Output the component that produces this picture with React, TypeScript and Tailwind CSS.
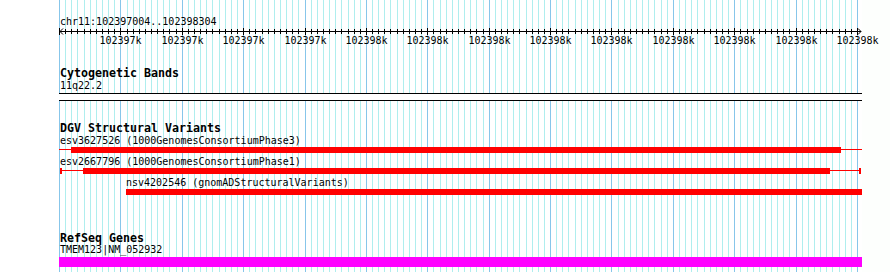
import React from 'react'

const PANEL_W = 803
const MINOR = 798 / 130
const gx = (k: number) => Math.round(k * MINOR) + 0.5

const mono = { fontFamily: '"DejaVu Sans Mono", monospace' }

const Grid = () => (
  <svg className="absolute left-0 top-0" width={PANEL_W} height={272} shapeRendering="crispEdges">
    {Array.from({ length: 131 }, (_, k) => (
      <line
        key={k}
        x1={gx(k)}
        x2={gx(k)}
        y1={0}
        y2={272}
        stroke={k % 10 === 0 ? '#87c6ea' : '#afeeee'}
        strokeWidth={1}
      />
    ))}
  </svg>
)

const Ruler = () => (
  <svg width={PANEL_W} height={20} className="block overflow-visible" style={mono}>
    <line x1={1} x2={802} y1={3.5} y2={3.5} stroke="black" shapeRendering="crispEdges" />
    <polyline points="4,0.5 1,3.5 4,6.5" fill="none" stroke="black" />
    <polyline points="799,0.5 802,3.5 799,6.5" fill="none" stroke="black" />
    {Array.from({ length: 131 }, (_, k) => (
      <line
        key={k}
        x1={gx(k)}
        x2={gx(k)}
        y1={k % 10 === 0 ? 0 : 1}
        y2={k % 10 === 0 ? 7 : 6}
        stroke="black"
        shapeRendering="crispEdges"
      />
    ))}
    {Array.from({ length: 13 }, (_, i) => (
      <text key={i} x={gx((i + 1) * 10)} y={15.5} textAnchor="middle" fontSize={10} fill="black">
        {i < 4 ? '102397k' : '102398k'}
      </text>
    ))}
  </svg>
)

type Variant = {
  label: string
  offset: number
  thick: [number, number]
  thin?: [number, number]
  caps?: boolean
}

const variants: Variant[] = [
  { label: 'esv3627526 (1000GenomesConsortiumPhase3)', offset: 1, thick: [12, 782], thin: [0, 803] },
  { label: 'esv2667796 (1000GenomesConsortiumPhase1)', offset: 1, thick: [24, 771], thin: [1, 802], caps: true },
  { label: 'nsv4202546 (gnomADStructuralVariants)', offset: 67, thick: [67, 803] },
]

const Title = ({ children, className }: { children: React.ReactNode; className: string }) => (
  <div className={`h-[12px] pl-px pt-px text-[11.63px] font-bold leading-[11px] text-black ${className}`}>{children}</div>
)

const Label = ({ children, pad = 'pl-px', className = '' }: { children: React.ReactNode; pad?: string; className?: string }) => (
  <div className={`${pad} h-[12px] whitespace-nowrap text-[10px] leading-[12px] text-black ${className}`}>{children}</div>
)

export default function App() {
  return (
    <div className="flex h-[272px] w-[890px] overflow-hidden bg-white" style={mono}>
      <div className="w-[59px] shrink-0 bg-white" />
      <div className="relative w-[803px] shrink-0 bg-white">
        <Grid />
        <div className="relative">
          <div className="h-[28px] pl-px pt-[16px] text-[10px] leading-[12px] text-black">chr11:102397004..102398304</div>
          <Ruler />

          {/* Cytogenetic Bands */}
          <Title className="mt-[19px]">Cytogenetic Bands</Title>
          <Label className="mt-px">11q22.2</Label>
          <svg width={PANEL_W} height={10} className="block" shapeRendering="crispEdges">
            <rect x={-2} y={1.5} width={PANEL_W + 4} height={7} fill="white" stroke="black" />
          </svg>

          {/* DGV Structural Variants */}
          <Title className="mt-[20px]">DGV Structural Variants</Title>
          <div className="mt-px flex flex-col gap-[3px]">
            {variants.map((v) => (
              <div key={v.label}>
                <Label pad={v.offset === 1 ? 'pl-px' : 'pl-[67px]'}>{v.label}</Label>
                <svg width={PANEL_W} height={6} className="block" shapeRendering="crispEdges">
                  {v.thin && <rect x={v.thin[0]} y={2} width={v.thin[1] - v.thin[0]} height={1} fill="#ff0000" />}
                  {v.caps && (
                    <>
                      <rect x={1} y={0} width={2} height={6} fill="#ff0000" />
                      <rect x={800} y={0} width={2} height={6} fill="#ff0000" />
                    </>
                  )}
                  <rect x={v.thick[0]} y={0} width={v.thick[1] - v.thick[0]} height={6} fill="#ff0000" />
                </svg>
              </div>
            ))}
          </div>

          {/* RefSeq Genes */}
          <Title className="mt-[37px]">RefSeq Genes</Title>
          <Label>TMEM123|NM_052932</Label>
          <div className="mt-px h-[10px] w-full bg-[#ff00ff]" />
        </div>
      </div>
      <div className="flex-1 bg-[#fdfffd]" />
    </div>
  )
}
